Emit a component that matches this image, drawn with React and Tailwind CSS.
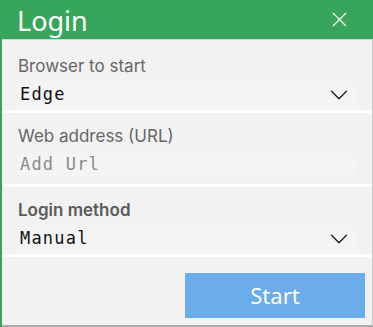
import { X, ChevronDown } from "lucide-react";

const labelFont = { fontFamily: "Inter, 'Noto Sans', sans-serif" };

const Field = ({ label, value, bold, muted, select, className }) => (
  <div className={`bg-[#f2f2f2] px-[16px] ${className}`}>
    <div
      className={`text-[17px] leading-[20px] ${bold ? "font-semibold text-[#5a5a5a]" : "text-[#666666]"}`}
      style={labelFont}
    >
      {label}
    </div>
    <div className="mt-[5px] h-[28px] rounded-[7px] bg-[#f4f4f4] flex items-center pl-[2px] pr-[2px]">
      <span
        className={`flex-1 text-[17px] tracking-[1.2px] font-['DejaVu_Sans_Mono',monospace] ${muted ? "text-[#8a8a8a]" : "text-[#111111]"}`}
      >
        {value}
      </span>
      {select && <ChevronDown size={30} strokeWidth={1.1} className="text-[#222]" />}
    </div>
  </div>
);

export default function App() {
  return (
    <div className="w-[373px] h-[327px] flex flex-col bg-[#f2f2f2] overflow-hidden">
      <div className="h-[39px] shrink-0 bg-[#37a65a] flex items-center justify-between pl-[17px] pr-[21px]">
        <span className="text-white text-[27px] font-['Noto_Sans',sans-serif] leading-none pt-[1px]">
          Login
        </span>
        <X size={25} strokeWidth={1.1} className="text-white" />
      </div>
      <div className="flex flex-1">
        <div className="w-[2px] bg-[#37a65a]" />
        <div className="flex-1 flex flex-col bg-white border-t border-[#d4d4d4] border-r border-r-[#c8c8c8] border-b-2 border-b-[#ababab]">
          <Field label="Browser to start" value="Edge" select className="h-[70px] pt-[16px]" />
          <Field label="Web address (URL)" value="Add Url" muted className="h-[71px] mt-[3px] pt-[13px]" />
          <Field label="Login method" value="Manual" bold select className="h-[67px] mt-[3px] pt-[13px]" />
          <div className="flex-1 mt-[3px] bg-[#f2f2f2] flex justify-end items-start pt-[16px] pr-[7px]">
            <button className="w-[180px] h-[45px] bg-[#6aacec] text-white text-[22px] font-['Noto_Sans',sans-serif]">
              Start
            </button>
          </div>
        </div>
      </div>
    </div>
  );
}
